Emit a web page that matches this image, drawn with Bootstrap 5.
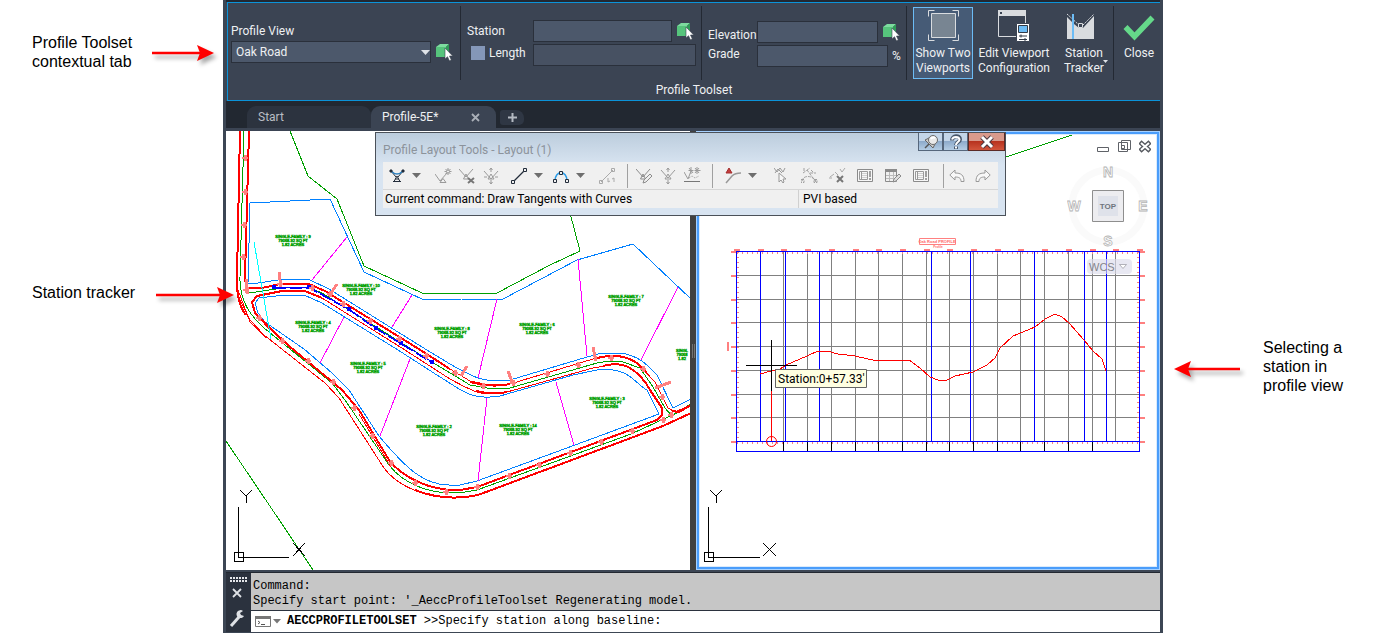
<!DOCTYPE html>
<html lang="en">
<head>
<meta charset="utf-8">
<meta name="viewport" content="width=device-width, initial-scale=1">
<title>Profile Toolset</title>
<link href="https://cdn.jsdelivr.net/npm/bootstrap@5.3.0/dist/css/bootstrap.min.css" rel="stylesheet">
<style>
  body { font-family: Roboto, "Open Sans", sans-serif; font-size: 12px; line-height: 15px; background: #fff; color: #000; }
  svg { display: block; }
  .note { font: 16px/19px "Liberation Sans", Arial, sans-serif; margin: 0; }
  .notes { flex: 0 0 223px; min-width: 0; }
  .notes-left { padding: 33px 0 0 32px; z-index: 3; }
  .notes-left .note { width: 119px; flex: none; }
  .notes-right { flex-basis: 221px; padding: 338px 0 0 8px; }
  .note-second { margin-top: 212px; }
  .note-arrow { flex: none; overflow: visible; filter: drop-shadow(3px 4px 2px rgba(0,0,0,.35)); }
  .app { background: #3c4654; border: solid #3c4654; border-width: 0 3px 1px; min-width: 0; }

  /* ribbon */
  .ribbon-top { height: 2px; background: #222831; }
  .ribbon { background: #3b4453; border: 1px solid #0b93d9; border-right: 0; color: #eef0f2; margin-left: 1px; }
  .ribbon-row { height: 80px; }
  .rule { width: 1px; height: 74px; margin-top: 3px; background: #232933; flex: none; }
  .rule-wide { margin-right: 6px; }
  .field, .field:focus { background: #4c586b; border: 1px solid #2a303b; border-radius: 0; color: #eef0f2; font-size: 12px; line-height: 15px; height: 22px; padding: 0 4px; min-width: 0; box-shadow: none; }
  .field-dim { background: #475162; }
  .grp-view { flex: 1 1 232px; padding: 21px 5px 0 3px; }
  .view-name { margin-bottom: 2px; }
  .grp-station { flex: 1 1 240px; padding: 17px 5px 0 6px; }
  .grp-elev { flex: 1 1 204px; padding: 17px 4px 0 6px; }
  .grid-station { display: grid; grid-template-columns: 66px 1fr auto; row-gap: 2px; align-items: center; }
  .grid-elev { display: grid; grid-template-columns: 49px 1fr 14px; row-gap: 2px; align-items: center; }
  .two { grid-column: span 2; }
  .pick { border: 0; padding: 0; background: none; width: 20px; flex: none; }
  .box { appearance: none; width: 14px; height: 14px; margin: 0 4px; background: #8497b8; border: 1px solid #8497b8; }
  .box:checked { background: #4fa3ff; }
  .drop { position: relative; }
  .drop select { appearance: none; width: 100%; }
  .drop svg { position: absolute; right: 1px; top: 9px; pointer-events: none; }
  .big { border: 1px solid transparent; background: none; color: inherit; padding: 0; height: 72px; margin-top: 4px; font-size: 12px; line-height: 15px; display: flex; flex-direction: column; align-items: center; white-space: nowrap; flex: none; }
  .big > svg { margin-bottom: 1px; height: 37px; }
  .big.on { background: #465b76; border-color: #6cbcf5; }
  .more { position: absolute; right: 4px; top: 52px; }
  .ribbon-name { height: 17px; }

  /* document tabs */
  .tabs { background: #222831; height: 30px; padding: 5px 0 0 21px; border-bottom: 3px solid #3b4453; }
  .doc { border: 0; height: 22px; background: #2c333f; color: #b9bec5; padding: 0 0 0 11px; text-align: left; border-radius: 9px 9px 0 0; font-size: 12px; }
  .doc-on { background: #3b4453; color: #eef0f2; }
  .doc-new { width: 24px; height: 15px; margin: 4px 0 0 4px; background: #2f3744; padding: 0; border: 0; border-radius: 3px 8px 5px 3px; display: grid; place-items: center; }

  /* drawing area */
  .space { position: relative; background: #404040; }
  .view { flex: 1 1 0; min-width: 0; background: #fff; position: relative; }
  .view > svg { width: 100%; height: auto; }
  .view-on::after { content: ""; position: absolute; inset: 0; pointer-events: none; box-shadow: inset 0 0 0 1px #a6d1ff, inset 0 0 0 3px #4a9dfb, inset 0 0 0 4px #dcebfb; }
  .split { width: 6px; background: #404040; flex: none; }
  .view svg text { font-family: "Liberation Sans", sans-serif; }
  .view svg .tip { font-family: Roboto, sans-serif; font-size: 12px; }
  .nav-tools { position: absolute; top: 7px; right: 9px; width: 84px; }
  .mini { border: 0; padding: 0; background: none; }

  .palette { position: absolute; top: 1px; left: 149px; width: 631px; height: 84px; background: linear-gradient(#bccddd, #d8e4f1 32px); border: 1px solid #4b5159; padding: 0 7px; }
  .palette-title { height: 29px; color: #8c939b; padding-top: 10px; font-size: 12px; }
  .caps { position: absolute; top: 0; right: 0; }
  .cap { height: 18px; width: 25px; border: 1px solid #56677c; border-top: 0; padding: 0; background: linear-gradient(#c3d5e8 45%, #8eabcb 50%, #b4cde4); display: grid; place-items: center; }
  .cap-close { width: 37px; background: linear-gradient(#d99a8c 45%, #b8331f 50%, #d2553c); border-color: #5b2a26; }
  .tools { background: #f0f0f0; height: 27px; padding-left: 2px; }
  .tool { border: 0; padding: 0; background: none; width: 24px; height: 27px; display: grid; place-items: center; flex: none; }
  .tool-l { width: 28px; } .tool-m { width: 26px; } .tool-c { width: 14px; }
  .tool-rule { width: 1px; height: 24px; background: #a0a0a0; flex: none; }
  .state { background: #f0f0f0; border-top: 1px solid #d6d6d6; height: 19px; padding-left: 2px; line-height: 18px; }
  .state-r { width: 200px; border-left: 1px solid #d0d0d0; padding-left: 4px; }

  /* command line */
  .cmd { background: #2b323e; border-top: 1px solid #222831; margin-top: 2px; font: 12px/15px "Liberation Mono", monospace; }
  .cmd-side { width: 25px; flex: none; }
  .cmd-log { background: #c6c6c6; height: 37px; padding: 6px 2px 0; }
  .cmd-line { background: #fff; height: 22px; border-top: 1px solid #2b323e; padding-left: 3px; }
  .cmd-line input { border: 0; outline: 0; background: none; min-width: 0; }
</style>
</head>
<body>
<svg width="0" height="0" class="position-absolute" aria-hidden="true">
  <symbol id="pick" viewBox="0 0 18 18"><path d="M1 4 5 1h9l-3 3z" fill="#7ddc9f"/><path d="M1 4h10v10H1z" fill="#56c47c"/><path d="M11 4l3-3v9l-3 4z" fill="#2f9a57"/><path d="M10 5v11l2.500-2.300 1.900 4.100 1.900-.9-1.800-3.900h3.200z" fill="#fff" stroke="#3b4453" stroke-width=".6"/></symbol>
  <symbol id="caret" viewBox="0 0 9 5"><path d="M0 0h9L4.500 5z" fill="#6e6e6e"/></symbol>
  <symbol id="sheet" viewBox="0 0 16 16"><path d="M.5 1.500h15v12H.5z" fill="#f7f7f7" stroke="#8b8b8b"/><path d="M2.500 3.500h8v8h-8zM4.500 3v9" fill="none" stroke="#9a9a9a"/><path d="M5 5.500h5M5 7.500h5M5 9.500h5" fill="none" stroke="#d0d0d0"/><path d="M12 3h2v6h-2zM12 10h2v2h-2z" fill="#a0a0a0"/></symbol>
</svg>

<div class="d-flex align-items-start">
  <aside class="notes notes-left position-relative">
    <div class="d-flex">
      <p class="note">Profile Toolset contextual tab</p>
      <svg class="note-arrow" width="65" height="38"><path d="M1 20h48" stroke="#f00" stroke-width="2.500"/><path d="M46 12l17 8-17 8 3-8z" fill="#f00"/></svg>
    </div>
    <div class="d-flex note-second">
      <p class="note">Station tracker</p>
      <svg class="note-arrow" width="84" height="19"><path d="M5 12h64" stroke="#f00" stroke-width="2.500"/><path d="M66 4l17 8-17 8 3-8z" fill="#f00"/></svg>
    </div>
  </aside>

  <main class="app flex-grow-1">
    <div class="ribbon-top"></div>
    <section class="ribbon" aria-label="Profile Toolset">
      <div class="ribbon-row d-flex">
        <div class="grp-view">
          <label for="pv" class="d-block view-name">Profile View</label>
          <div class="d-flex">
            <div class="drop flex-grow-1"><select id="pv" class="field"><option>Oak Road</option></select><svg width="9" height="5"><path d="M0 0h9L4.500 5z" fill="#dfe3e8"/></svg></div>
            <button class="pick ms-1" aria-label="Pick profile view"><svg width="18" height="18"><use href="#pick"/></svg></button>
          </div>
        </div>
        <div class="rule"></div>
        <div class="grp-station"><div class="grid-station">
          <label for="st">Station</label><input id="st" class="field">
          <button class="pick ms-1" aria-label="Pick station"><svg width="18" height="18"><use href="#pick"/></svg></button>
          <div class="d-flex align-items-center pb-1"><input type="checkbox" id="len" class="box"><label for="len">Length</label></div>
          <input class="field field-dim two" aria-label="Length value">
        </div></div>
        <div class="rule"></div>
        <div class="grp-elev"><div class="grid-elev">
          <label for="el" class="pt-2">Elevation</label><div class="d-flex two"><input id="el" class="field flex-grow-1"><button class="pick ms-1" aria-label="Pick elevation"><svg width="18" height="18"><use href="#pick"/></svg></button></div>
          <label for="gr" class="pb-1">Grade</label><input id="gr" class="field"><span class="ps-1">%</span>
        </div></div>
        <div class="rule rule-wide"></div>
        <button class="big on" style="width:60px">
          <svg width="34" height="37" fill="none" stroke="#d9dcdf"><path d="M5.500 5.500h24v24h-24z" fill="#788592"/><path d="M2.500 8.500v-6h6M26.500 2.500h6v6M32.500 26.500v6h-6M8.500 32.500h-6v-6"/></svg>
          <span>Show Two<br>Viewports</span></button>
        <button class="big mx-1" style="width:74px">
          <svg width="34" height="37"><path d="M1.500 2.500h27v26h-27z" fill="none" stroke="#d9dcdf"/><path d="M1 2h28v6H1z" fill="#d9dcdf"/><path d="M3 4h2v2H3z" fill="#3b4453"/><path d="M19.500 15.500h13v18h-13z" fill="#fff" stroke="#3b4453"/><path d="M21.500 17.500h9v7h-9z" fill="#6cbcf5" stroke="#333b47"/><path d="M22 28h8M22 31.500h8M24 26.500v3M28 30v3" stroke="#333b47"/></svg>
          <span>Edit Viewport<br>Configuration</span></button>
        <button class="big position-relative" style="width:58px">
          <svg width="36" height="37"><path d="M1 9l5 5v17H1zM8 16l5 4h4l11-12v23H8z" fill="#d9dcdf"/><path d="M1 6l12 11M17 17L28 6" fill="none" stroke="#d9dcdf" stroke-dasharray="2 1"/><path d="M12.500 15.500h4v4h-4z" fill="#3b4453" stroke="#d9dcdf"/><path d="M7 6v25" stroke="#6cbcf5" stroke-width="2"/></svg>
          <span>Station<br>Tracker</span>
          <span class="more"><svg width="5" height="3"><path d="M0 0h5L2.500 3z" fill="#dfe3e8"/></svg></span></button>
        <div class="rule"></div>
        <button class="big ps-1" style="width:46px">
          <svg width="32" height="37"><path d="M2.500 19l9 9.500L29.500 9.500" fill="none" stroke="#65d98a" stroke-width="5.500"/></svg>
          <span>Close</span></button>
      </div>
      <div class="ribbon-name text-center">Profile Toolset</div>
    </section>

    <nav class="tabs d-flex" aria-label="Drawings">
      <button class="doc" style="width:124px">Start</button>
      <button class="doc doc-on d-flex align-items-center justify-content-between pe-3" style="width:125px"><span>Profile-5E*</span><svg width="9" height="9"><path d="M1 1l7 7M8 1L1 8" stroke="#aab0b8" stroke-width="1.800"/></svg></button>
      <button class="doc-new" aria-label="New drawing"><svg width="9" height="9"><path d="M4.500 0v9M0 4.500h9" stroke="#b4bac2" stroke-width="2"/></svg></button>
    </nav>

    <section class="space d-flex">
      <div class="view">
        <svg viewBox="226 131 464 439" role="img" aria-label="Plan view">
          <g fill="none" shape-rendering="crispEdges">
            <g stroke="#00a000">
              <path d="M290 131l18 45 29 23 27 67 58 27h75l53-28 30-14-10-38M226 441l87 129"/>
              <path d="M244 131l-4 146c-1 25 12 40 24 51l68 55 13 17 44 65c13 17 43 35 88 25l154-56 48-22 13-9"/>
              <path d="M249 293l40-6h18l15 6 110 69 38 23 23 4 17-1 87-25 13-2 13 1 17 6 13 19 12 21 6 7"/>
            </g>
            <g stroke="#0080ff">
              <path d="M248 283l2-80 80-4 34 73 60 28 38-1h41l74-39 56-16 58 55M248 283l4 1 32-5h18l8 1 19 9 93 58 28 17c20 11 32 20 60 16l77-23 15-4h20c24 5 29 18 35 22l16 33 18-9"/>
              <path d="M255 303l4-5 25-3h20l18 8 76 47 42 27c22 13 30 24 60 19l73-21 24-5c32-4 38 14 50 20l12 24-84 31-98 36-17 4h-11c-26 0-44-18-70-49l-30-46-17-17-28-24-39-27-7-9z"/>
            </g>
            <g stroke="#f00">
              <path stroke-width="2" d="M240 131l-3 146c-1 12 2 30 9 38"/>
              <path d="M240 300l10 20 14 15 61 48 14 15 43 67c14 22 53 40 96 30"/>
              <path d="M238 290l12 32 16 16"/>
              <path stroke-width="2" d="M415 490q30 12 63 5l185-69 28-13"/>
              <path stroke-width="2" d="M249 131l-4 146 1 10 3 1 13 0 18-4h29l16 7 97 60 28 18"/>
              <path d="M450 369l20 12 20 4 20-1 83-25 14-3"/>
              <path stroke-width="2" d="M470 382q20 6 40 2M597 358q24-6 40 5l10 10"/>
              <path d="M637 363l18 19 13 26 7 4 16-7"/>
              <path stroke-width="2" d="M672 411l7 1 12-7"/>
              <path d="M306 291l16 7 83 52 45 29c26 14 32 18 57 13l86-24 24-4"/>
              <path stroke-width="2" d="M322 298l-17-7h-23l-25 5-5 6 3 11 14 14 20 19M476 391q16 4 31 1M603 366q18-5 30 4 10 7 17 20l12 18v7l-5 5-180 67-17 3"/>
              <path stroke-width="2" d="M264 323l25 23 53 44 17 20 30 50c13 17 40 31 71 30"/>
              <path d="M359 414l32 53"/>
            </g>
            <path stroke="#f0f" d="M347 237l-35 43M412 295l-20 32M344 317l-24 46M410 359l-30 77M497 299l-19 79M578 259l9 97M678 287l-37 73M556 382l18 63M487 398l-9 83"/>
            <path stroke="#0ff" d="M254 242l17 97"/>
            <path stroke="#00f" d="M274 287h35l40 22 27 19 25 15 31 19"/>
            <path stroke="#00f" stroke-dasharray="12 4" d="M274 288h35l40 22 27 19 25 15 31 19"/>
            <path stroke="#ff8080" stroke-width="3" d="M279 272l2 15M337 284l-8 12M467 366l-6 10M508 371l5 13M593 347l3 14M671 382l-16 6M246 279l2 15"/>
            <path stroke="#000" d="M238.500 507v50.500H289M234.500 552.500h9v9h-9zM240 490l6 6 6-6M246 496v7M293 543l12 13M305 543l-12 13"/>
          </g>
          <g fill="#00f"><path d="M272 285h4v4h-4zM307 285h4v4h-4zM347 307h4v4h-4zM374 326h4v4h-4zM399 341h4v4h-4zM430 360h4v4h-4z"/></g>
          <g id="stations" fill="#ff8080" shape-rendering="crispEdges"></g>
          <g id="lots" fill="#00a000" stroke="#00a000" stroke-width=".5" font-size="4" text-anchor="middle"></g>
        </svg>
      </div>
      <div class="split d-flex align-items-center"><svg width="6" height="14"><path d="M2.500 0v14M4.500 0v14" stroke="#8a8a8a" stroke-width=".7"/></svg></div>
      <div class="view view-on">
        <svg viewBox="696 131 464 439" role="img" aria-label="Profile view">
          <g fill="none" shape-rendering="crispEdges">
            <path stroke="#00a000" d="M1000 159l81-27"/>
            <g id="grid" stroke="#808080"></g>
            <path stroke="#ff8080" stroke-width="2" stroke-dasharray="1 4" d="M738 252v189M1138 252v189M737 253h402M737 443h402"/>
            <path id="feet" stroke="#000"/>
            <path stroke="#00f" d="M736.500 251.500h403v200h-403zM736.500 441.500h403M760.500 252v190M785.500 252v190M819.500 252v190M931.500 252v190M970.500 252v190M1034.500 252v190M1084.500 252v190M1106.500 252v190"/>
            <path stroke="#f00" d="M760 374l11-3 9-2 6-4 21-9 11-5h9l11 3 17 2 22 5 10-1h22l11 8 10 9 8 3h9l8-4 18-4 14-7 8-7 5-10 13-12 22-9 10-8 10-5 7 3 7 6 15 17 9 11 9 8 4 12M771.500 391v50"/>
            <path stroke="#000" d="M771.500 340v51M746 365.500h51M708.500 507v50.500H760M704.500 552.500h9v9h-9zM710 490l6 6 6-6M716 496v7M763 543l13 13M776 543l-13 13"/>
          </g>
          <circle cx="771.500" cy="441.500" r="5" fill="none" stroke="#f00"/>
          <g id="marks" fill="#ff8080" shape-rendering="crispEdges"><path d="M727 342h2v9h-2z"/></g>
          <path d="M919.500 238.500h36v6h-36z" fill="#fff" stroke="#ff8080"/>
          <g fill="#ff6868" font-weight="bold" text-anchor="middle"><text x="937" y="243" font-size="4">Oak Road PROFILE</text><text x="938" y="248" font-size="3">Profile</text></g>
          <path d="M775.500 369.500h91v18h-91z" fill="#ffffe1" stroke="#646464"/>
          <text class="tip" x="778" y="383">Station:0+57.33'</text>
        </svg>
        <div class="nav-tools">
          <div class="d-flex justify-content-end gap-2">
            <button class="mini" aria-label="Minimize"><svg width="13" height="16"><path d="M.5 9.500h11v4H.5z" fill="#fff" stroke="#5f6268"/></svg></button>
            <button class="mini" aria-label="Restore"><svg width="13" height="16" fill="#fff" stroke="#5f6268"><path d="M3.500 2.500h9v9h-9zM.5 4.500h9v9h-9zM3.500 7.500h3v3h-3z"/></svg></button>
            <button class="mini" aria-label="Close view"><svg width="12" height="16"><path d="M1 4l10 9M11 4L1 13" stroke="#55585e" stroke-width="4.500"/><path d="M2 5l8 7M10 5l-8 7" stroke="#fff" stroke-width="2"/></svg></button>
          </div>
          <svg class="mt-1" width="84" height="99" fill="none" font-size="14" font-weight="bold" text-anchor="middle">
            <circle cx="41" cy="48" r="36" stroke="#fafafa" stroke-width="7"/>
            <path d="M25.500 32.500h31v31h-31z" fill="#ededf0" stroke="#8e8e8e"/><path d="M31 38h20v20H31z" fill="#dfe2ea"/>
            <text x="41" y="51" font-size="8" fill="#70757d">TOP</text>
            <g fill="#fff" stroke="#b4b4b4" stroke-width=".8"><text x="41" y="19">N</text><text x="7" y="53">W</text><text x="76" y="53">E</text><text x="41" y="88">S</text></g>
          </svg>
          <button class="mini d-block" aria-label="WCS menu"><svg width="66" height="18"><rect x="20" y="2" width="45" height="15" rx="4" fill="#dcdceb" fill-opacity=".65"/><text x="22" y="14" font-size="11" fill="#85858c">WCS</text><path d="M52.500 7.500h7l-3.500 4z" fill="#fff" stroke="#a0a0a8" stroke-width=".8"/></svg></button>
        </div>
      </div>

      <div class="palette" role="dialog" aria-label="Profile Layout Tools">
        <div class="palette-title">Profile Layout Tools - Layout (1)</div>
        <div class="caps d-flex">
          <button class="cap" aria-label="Pin"><svg width="16" height="16"><path d="M2 14l5-5" stroke="#555" stroke-width="1.500"/><path d="M2 6l8 8 2-4-6-6z" fill="#ccc" stroke="#666"/><circle cx="10" cy="6" r="4.500" fill="#e9e9e9" stroke="#6a6a6a"/><path d="M8 5a3 3 0 014-1" stroke="#fff" stroke-width="2" fill="none"/></svg></button>
          <button class="cap" aria-label="Help"><svg width="14" height="16" fill="none"><path d="M3 6.500C3 1 11 1 11 5.500 11 8 7 8 7 11M7 12.500v2.500" stroke="#47566a" stroke-width="4"/><path d="M3 5.500C4 2 10 2 10.500 5.500 10.500 8 7 8 7 11M7 12.500v2" stroke="#fff" stroke-width="2"/></svg></button>
          <button class="cap cap-close" aria-label="Close palette"><svg width="16" height="14"><path d="M3 2l10 10M13 2L3 12" stroke="#4b3a42" stroke-width="5"/><path d="M3 2l10 10M13 2L3 12" stroke="#fff" stroke-width="3"/></svg></button>
        </div>
        <div class="tools d-flex align-items-center">
          <button class="tool" aria-label="Tangents"><svg width="16" height="16" fill="none" stroke="#222c3a"><path d="M2 3l5 6M14 3L9 9M5 13.500L8 8l3 5.500M4 13.500h8M6 11h4"/><path d="M2 3c4 4 8 4 12 0" stroke="#2b7fbe" stroke-width="1.500"/><path d="M1 2h2v2H1zM13 2h2v2h-2z" fill="#222c3a"/></svg></button>
          <button class="tool tool-c me-2" aria-label="Tangent options"><svg width="9" height="5"><use href="#caret"/></svg></button>
          <button class="tool" aria-label="Insert PVI"><svg width="17" height="16" fill="none" stroke="#9a9a9a"><path d="M0 6l5 7 7-8M5 14.500l3-4 3 4zM13 0v7M9.500 3.500h7M10.500 1l5 5M15.500 1l-5 5"/><circle cx="13" cy="3.500" r="1.500" fill="#f0f0f0"/></svg></button>
          <button class="tool" aria-label="Delete PVI"><svg width="17" height="16" fill="none" stroke="#9a9a9a"><path d="M0 1l7 8 7-8M4.500 11L7 6l2.500 5z"/><path d="M9 10l6 5M15 10l-6 5" stroke="#777" stroke-width="2"/></svg></button>
          <button class="tool me-1" aria-label="Move PVI"><svg width="16" height="16" fill="none" stroke="#9a9a9a"><path d="M1 3l7 8 7-8M5 11l3-5 3 5zM8 0v4M8 12v4M1 9h3M12 9h3M6.500 2L8 0l1.500 2M6.500 14L8 16l1.500-2"/></svg></button>
          <button class="tool" aria-label="Line"><svg width="16" height="16"><path d="M2 14L14 2" stroke="#222c3a" stroke-width="1.300"/><path d="M.5 12.500h3v3h-3zM12.500.5h3v3h-3z" fill="#f0f0f0" stroke="#222c3a"/></svg></button>
          <button class="tool tool-c me-1" aria-label="Line options"><svg width="9" height="5"><use href="#caret"/></svg></button>
          <button class="tool" aria-label="Curve"><svg width="16" height="14"><path d="M2 12C2 1 14 1 14 12" fill="none" stroke="#2b9be6" stroke-width="1.500"/><path d="M.5 10.500h3v3h-3zM12.500 10.500h3v3h-3zM6.500 2.500h3v3h-3z" fill="#f0f0f0" stroke="#222c3a"/></svg></button>
          <button class="tool tool-c me-2" aria-label="Curve options"><svg width="9" height="5"><use href="#caret"/></svg></button>
          <button class="tool me-2" aria-label="Convert line"><svg width="17" height="16" fill="none" stroke="#aaa"><path d="M2 14L14 2M.5 12.500h3v3h-3zM12.500.5h3v3h-3zM9 10v4l2-1M15 14v-4l-2 1"/></svg></button>
          <span class="tool-rule me-1"></span>
          <button class="tool" aria-label="Edit PVI"><svg width="17" height="16" fill="none" stroke="#8c8c8c"><path d="M0 1l7 8 7-8M4.500 11L7 6l2.500 5z"/><path d="M7 15l1-3 6-6 2 2-6 6z" fill="#eee"/></svg></button>
          <button class="tool" aria-label="Raise PVI"><svg width="16" height="16" fill="none" stroke="#9a9a9a"><path d="M1 2l7 8 7-8M5 11l3-5 3 5zM8 0v4M8 12v4M6.500 2L8 0l1.500 2M6.500 14L8 16l1.500-2"/></svg></button>
          <button class="tool me-2" aria-label="Show PVIs"><svg width="17" height="17" fill="none" stroke="#9a9a9a"><path d="M0 5l4 7 3-8M7 0v7M4.500 3.500h5M13 0v7M10.500 3.500h6M11 1l4 5M15 1l-4 5M5 1l4 5"/><path d="M5 11l3-2 3 2 4-2" stroke-dasharray="1 1"/><path d="M0 14.500h16" stroke="#777"/></svg></button>
          <span class="tool-rule me-2"></span>
          <button class="tool" aria-label="Tangent point"><svg width="17" height="17"><path d="M1 16l6-7c2-2 5-3 9-3" fill="none" stroke="#999" stroke-width="1.500"/><path d="M1 6l3-5 3 5z" fill="#c33c3c" stroke="#a32c2c"/></svg></button>
          <button class="tool tool-c me-2" aria-label="Tangent point options"><svg width="9" height="5"><use href="#caret"/></svg></button>
          <button class="tool tool-l" aria-label="Select PVI"><svg width="14" height="17" fill="none" stroke="#999"><path d="M0 1l3 4 3-4M6 1l3 4 2-4M1 6l3-4 4 4"/><path d="M5 6v9l2-2 2 3 1-1-1-3h3z" fill="#f7f7f7"/></svg></button>
          <button class="tool tool-l" aria-label="Select entity"><svg width="17" height="17" fill="none" stroke="#a0a0a0"><path d="M2 6l7-5M1 14c1-6 10-6 14 0M6 3l9 12M0 12.500h3v3H0zM13 12.500h3v3h-3zM10 3l3 3M3 1v3M9 6h6" stroke-dasharray="3 1"/></svg></button>
          <button class="tool tool-l" aria-label="Delete entity"><svg width="17" height="17" fill="none" stroke="#aaa"><path d="M1 10l4-3M11 2l2 3 3-4M0 11h3M6 5l3 3"/><path d="M8 9l6 6M14 9l-6 6" stroke="#777" stroke-width="2"/></svg></button>
          <button class="tool tool-l" aria-label="Profile parameters"><svg width="16" height="16"><use href="#sheet"/></svg></button>
          <button class="tool tool-l" aria-label="Profile grid"><svg width="17" height="16" fill="none" stroke="#8b8b8b"><path d="M.5 1.500h11v12H.5z"/><path d="M4.500 4v9M8.500 4v9M1 7.500h10M1 10.500h8" stroke="#bbb"/><path d="M0 1h12v3H0z" fill="#8b8b8b" stroke="none"/><path d="M8 14l1-3 5-5 2 2-5 5z" fill="#ddd"/></svg></button>
          <button class="tool tool-l me-2" aria-label="Entity view"><svg width="16" height="16"><use href="#sheet"/></svg></button>
          <span class="tool-rule"></span>
          <button class="tool tool-m" aria-label="Undo"><svg width="16" height="14"><path d="M.8 6L6 1v3c6 0 9 2 9 8.500h-3C12 9 10 8 6 8v3z" fill="#f8f8f8" stroke="#999"/></svg></button>
          <button class="tool tool-m" aria-label="Redo"><svg width="16" height="14"><path d="M15.200 6L10 1v3c-6 0-9 2-9 8.500h3C4 9 6 8 10 8v3z" fill="#f8f8f8" stroke="#999"/></svg></button>
        </div>
        <div class="state d-flex"><div class="flex-grow-1">Current command: Draw Tangents with Curves</div><div class="state-r">PVI based</div></div>
      </div>
    </section>

    <section class="cmd d-flex" aria-label="Command line">
      <div class="cmd-side"><svg width="25" height="58"><path d="M4 5h18M4 8h18" stroke="#e5e7ea" stroke-width="2" stroke-dasharray="2 1"/><path d="M7 16l8 8M15 16l-8 8" stroke="#dfe2e6" stroke-width="1.800"/><path d="M5 53l8-9" stroke="#dfe2e6" stroke-width="3"/><path d="M17 38a4 4 0 1 0 1 5l-3-1-1-2z" fill="#dfe2e6"/></svg></div>
      <div class="flex-grow-1">
        <div class="cmd-log">Command:<br>Specify start point: '_AeccProfileToolset Regenerating model.</div>
        <div class="cmd-line d-flex align-items-center">
          <svg width="29" height="14"><path d="M1.500 1.500h15v10h-15z" fill="#fff" stroke="#777"/><path d="M1 1h16v3H1z" fill="#777"/><path d="M4 6l2 1.500L4 9M7 9.500h4" fill="none" stroke="#555"/><path d="M19 4h8l-4 4.500z" fill="#777"/></svg>
          <label for="cl" class="ms-1"><b>AECCPROFILETOOLSET</b> &gt;&gt;Specify station along baseline:</label><input id="cl" class="flex-grow-1">
        </div>
      </div>
    </section>
  </main>

  <aside class="notes notes-right d-flex">
    <svg class="note-arrow" width="92" height="57"><path d="M17 31h52" stroke="#f00" stroke-width="2.500"/><path d="M20 23L3 31l17 8-3-8z" fill="#f00"/></svg>
    <p class="note">Selecting a<br>station in<br>profile view</p>
  </aside>
</div>

<script src="https://cdn.jsdelivr.net/npm/bootstrap@5.3.0/dist/js/bootstrap.bundle.min.js"></script>
<script>
  // Parcel labels: centre of each lot and its number; the lot on the view's edge has a short label
  const lots = [[293,240,9],[361,289,10],[313,326,4],[368,367,5],[452,332,8],[537,328,6],[626,300,7],[607,402,3],[518,429,14],[434,430,2]];
  const label = (x, y, rows) => rows.map((r, i) => `<text x="${x}" y="${y - 2 + 4 * i}">${r}</text>`).join('');
  document.getElementById('lots').innerHTML =
    lots.map(([x, y, n]) => label(x, y, [`SINGLE-FAMILY : ${n}`, '79068.92 SQ FT', '1.82 ACRES'])).join('') + label(682, 354, ['SINGL', '79068', '1.82']);

  // Station ticks along both alignments
  const ticks = [[245,158],[245,192],[244,225],[243,257],[246,290],[259,318],[282,341],[308,361],[333,382],[354,408],[372,436],[391,463],[415,483],[446,492],
    [280,284],[312,288],[330,294],[343,304],[370,321],[399,339],[426,356],[455,373],[483,386],[513,383],[547,374],[578,365],[611,358],[643,369],[662,397],[477,487],[509,476],[539,465],[570,453],[601,442],[632,431],[663,420],[671,415]];
  document.getElementById('stations').innerHTML = ticks.map(([x, y]) =>
    `<path d="M${x - 3} ${y - 1}h6v2h-6zM${x - 1} ${y - 3}h3v6h-3z"/>`).join('');

  // Profile grid: 17 columns by 8 rows
  let lines = '', marks = '', feet = '';
  for (let i = 0; i <= 17; i++) {
    const x = Math.round(736 + i * 23.7);
    if (i > 1 && i < 17) lines += `M${x}.5 252v190`;
    if (i > 1 && i < 16) feet += `M${x}.5 442v10`;
    marks += `<path d="M${x - 2} 249h6v2h-6z"/>`;
  }
  for (let j = 0; j <= 8; j++) {
    const y = Math.round(251 + j * 23.75);
    if (j > 0 && j < 8) lines += `M737 ${y}.5h402`;
    marks += `<path d="M731 ${y}h5v2h-5zM1140 ${y}h5v2h-5z"/>`;
  }
  document.getElementById('grid').innerHTML = `<path d="${lines}"/>`;
  document.getElementById('feet').setAttribute('d', feet);
  document.getElementById('marks').innerHTML += marks;
</script>
</body>
</html>
